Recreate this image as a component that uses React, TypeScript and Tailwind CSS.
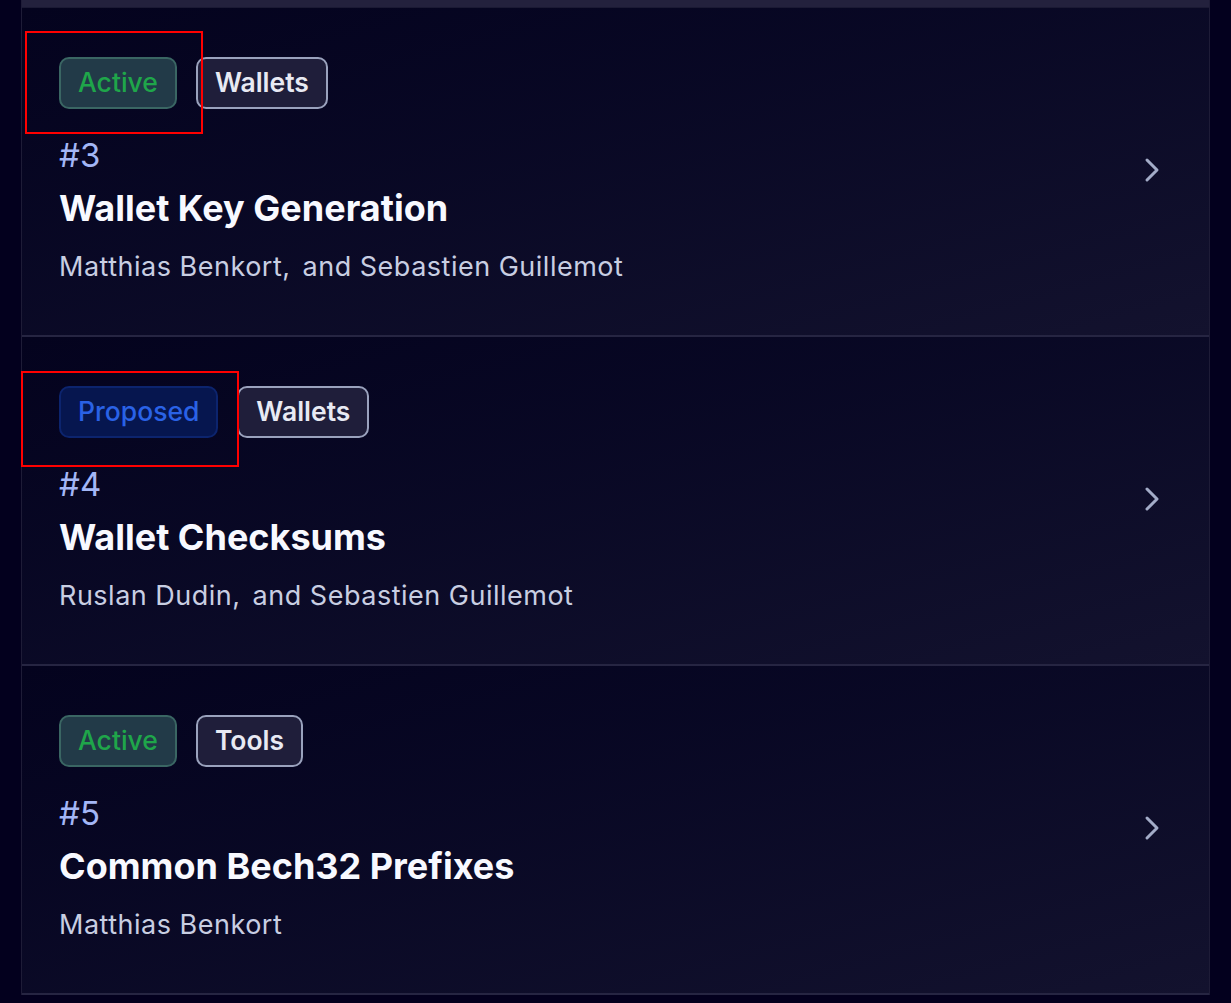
import { ChevronRight } from 'lucide-react';

type Tag = { label: string; kind: 'active' | 'proposed' | 'category' };

type Proposal = {
  number: number;
  title: string;
  authors: string[];
  tags: Tag[];
};

const proposals: Proposal[] = [
  {
    number: 3,
    title: 'Wallet Key Generation',
    authors: ['Matthias Benkort', 'Sebastien Guillemot'],
    tags: [
      { label: 'Active', kind: 'active' },
      { label: 'Wallets', kind: 'category' },
    ],
  },
  {
    number: 4,
    title: 'Wallet Checksums',
    authors: ['Ruslan Dudin', 'Sebastien Guillemot'],
    tags: [
      { label: 'Proposed', kind: 'proposed' },
      { label: 'Wallets', kind: 'category' },
    ],
  },
  {
    number: 5,
    title: 'Common Bech32 Prefixes',
    authors: ['Matthias Benkort'],
    tags: [
      { label: 'Active', kind: 'active' },
      { label: 'Tools', kind: 'category' },
    ],
  },
];

const tagStyles: Record<Tag['kind'], string> = {
  active: 'bg-[#223a48] border-[#3a6663] text-[#1fa64a] font-medium',
  proposed: 'bg-[#06164f] border-[#0c246e] text-[#2a62e6] font-medium',
  category: 'bg-[#1f1e3a] border-[#9aa2bd] text-[#e8eaf3] font-semibold',
};

function Badge({ tag }: { tag: Tag }) {
  return (
    <span
      className={`flex h-[52px] items-center rounded-[10px] border-2 px-[17px] text-[26.5px] ${tagStyles[tag.kind]}`}
    >
      {tag.label}
    </span>
  );
}

function Authors({ names }: { names: string[] }) {
  if (names.length === 1) return <>{names[0]}</>;
  return (
    <>
      {names.slice(0, -1).join(', ')},
      <span className="ml-[12px]">and {names[names.length - 1]}</span>
    </>
  );
}

function ProposalRow({ p }: { p: Proposal }) {
  return (
    <div className="flex items-center justify-between border-b-2 border-[#262542] bg-gradient-to-br from-[#04031e] to-[#13122e] px-[37px] pt-[49px] pb-[52px]">
      <div className="flex flex-col">
        <div className="flex gap-[19px]">
          {p.tags.map((t) => (
            <Badge key={t.label} tag={t} />
          ))}
        </div>
        <div className="mt-[26px] text-[33px] leading-[40px] text-[#a3b6f6]">#{p.number}</div>
        <div className="mt-[11px] text-[36px] font-bold leading-[44px] text-[#f8f9ff]">{p.title}</div>
        <div className="mt-[21px] text-[27px] leading-[32px] tracking-[0.5px] text-[#c8cee2]">
          <Authors names={p.authors} />
        </div>
      </div>
      <ChevronRight size={40} strokeWidth={1.8} className="text-[#a3acc8]" />
    </div>
  );
}

export default function App() {
  return (
    <div
      className="relative min-h-[1003px] bg-[#03001e] px-[21px]"
      style={{ fontFamily: 'Inter, "Noto Sans", sans-serif' }}
    >
      <div className="border-x border-[#1e1c37]">
        <div className="h-[7px] bg-[#23213d]" />
        <div className="border-t border-[#1b1a34]">
          {proposals.map((p) => (
            <ProposalRow key={p.number} p={p} />
          ))}
        </div>
      </div>
      <div className="pointer-events-none absolute left-[25px] top-[31px] h-[103px] w-[178px] border-2 border-[#ff0000]" />
      <div className="pointer-events-none absolute left-[21px] top-[371px] h-[96px] w-[218px] border-2 border-[#ff0000]" />
    </div>
  );
}
